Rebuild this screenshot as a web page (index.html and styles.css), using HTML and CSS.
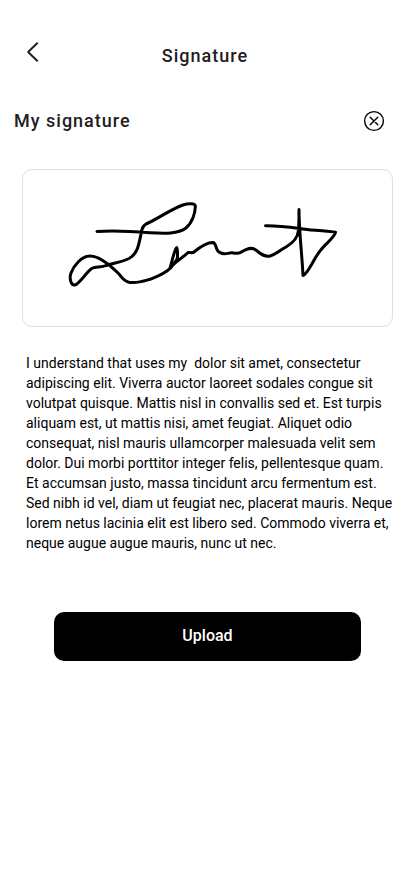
FILE: index.html
```html
<!DOCTYPE html>
<html lang="en">
<head>
<meta charset="utf-8">
<meta name="viewport" content="width=device-width, initial-scale=1">
<title>Signature</title>
<link rel="stylesheet" href="styles.css">
</head>
<body>
<main class="screen">
  <header class="topbar">
    <button class="icon-button back" aria-label="Back">
      <svg width="14" height="22" viewBox="0 0 14 22"><path d="M11.700 1.800 2.100 11l9.600 9.200"/></svg>
    </button>
    <h1 class="title">Signature</h1>
  </header>
  <section class="section-head">
    <h2 class="title">My signature</h2>
    <button class="icon-button clear" aria-label="Clear signature">
      <svg width="22" height="22" viewBox="0 0 22 22"><circle cx="11" cy="11" r="9.400"/><path d="m7.200 7.200 7.600 7.600m0-7.600-7.600 7.600"/></svg>
    </button>
  </section>
  <div class="pad">
    <svg class="ink" width="369" height="156" viewBox="23 170 369 156">
      <path d="M97 231.4C115 230.2 135 231.5 150 232.7C165 233.6 178 234 186 228C192 223 195.5 213 195.3 206C195 203 188 203.3 183 205C171 209 156 220 146 224C141 227 142.500 229 141 234C139 243 138 254 129 258.500C120 263 112 263 106 265.500C101 268 95 266 91 269C86 273 79 284 75 285C70 285.500 69.500 277 71 273C74 265 82 256 90 256C100 256 111 266 119 274C122 278 123.500 281 129 282.200C137 283.500 144 281 150 279.300C159 276 166 273 171 267.500C175 262 177.500 261 177.500 257C177.500 253 177.800 249.500 176.600 247.700C174 251 172.500 260 170 268C177 260 182 258.500 188 252.500C190 252 192 253.500 194 252C200 247 206 242.500 213 242.500C217 243.500 215 250 219 252C224 256 228 252.500 232 252.800C236 253.500 239 254 243 251C247 249 251 247 255 249.500C260 253 264 257.500 270 256C277 254 280 250 286 247C293 243 298 237 298.500 230C299 223 299 216 299 209.500C299 233 302 253 303 275.500C308 274 314 258 320 251C325 244 334 238 335.500 232.300C330 231.200 318 230.600 309 229.700C295 228 282 225.500 265.500 225.700"/>
    </svg>
  </div>
  <p class="terms">I understand that uses my&nbsp; dolor sit amet, consectetur<br>adipiscing elit. Viverra auctor laoreet sodales congue sit<br>volutpat quisque. Mattis nisl in convallis sed et. Est turpis<br>aliquam est, ut mattis nisi, amet feugiat. Aliquet odio<br>consequat, nisl mauris ullamcorper malesuada velit sem<br>dolor. Dui morbi porttitor integer felis, pellentesque quam.<br>Et accumsan justo, massa tincidunt arcu fermentum est.<br>Sed nibh id vel, diam ut feugiat nec, placerat mauris. Neque<br>lorem netus lacinia elit est libero sed. Commodo viverra et,<br>neque augue augue mauris, nunc ut nec.</p>
  <button class="upload">Upload</button>
</main>
</body>
</html>
```
FILE: styles.css
```css
* { box-sizing: border-box; }
body {
  margin: 0;
  background: #fff;
  color: #000;
  font-family: Roboto, "Liberation Sans", sans-serif;
}
.screen {
  display: flex;
  flex-direction: column;
  min-height: 896px;
  padding-top: 36px;
}
.topbar {
  display: grid;
  grid-template-columns: 64px 1fr 64px;
  align-items: center;
  height: 40px;
}
.title {
  margin: 0;
  color: #1f2022;
  font-size: 18px;
  font-weight: 500;
  line-height: 24px;
  letter-spacing: 1px;
}
.topbar .title {
  padding-right: 4px;
  text-align: center;
}
.icon-button {
  display: flex;
  padding: 0;
  border: 0;
  background: none;
}
.icon-button svg {
  fill: none;
  stroke: #1f2022;
  stroke-width: 2;
}
.back { padding: 0 0 8px 26px; }
.back svg { stroke-linejoin: bevel; }
.clear svg {
  stroke: #000;
  stroke-width: 1.4;
  stroke-linecap: round;
}
.section-head {
  display: flex;
  align-items: center;
  justify-content: space-between;
  height: 24px;
  margin: 33px 29px 0 14px;
}
.pad {
  width: 371px;
  height: 158px;
  margin: 36px 0 0 22px;
  border: 1px solid #dedede;
  border-radius: 10px;
}
.ink {
  display: block;
  fill: none;
  stroke: #000;
  stroke-width: 3;
  stroke-linecap: round;
  stroke-linejoin: round;
}
.terms {
  margin: 26px 0 0 26px;
  font-size: 14px;
  line-height: 20px;
  white-space: nowrap;
}
.upload {
  width: 307px;
  height: 49px;
  margin: 59px 0 0 54px;
  padding: 0 0 2px;
  border: 0;
  border-radius: 10px;
  background: #000;
  color: #fff;
  font: 500 16px/20px Roboto, "Liberation Sans", sans-serif;
}
```
